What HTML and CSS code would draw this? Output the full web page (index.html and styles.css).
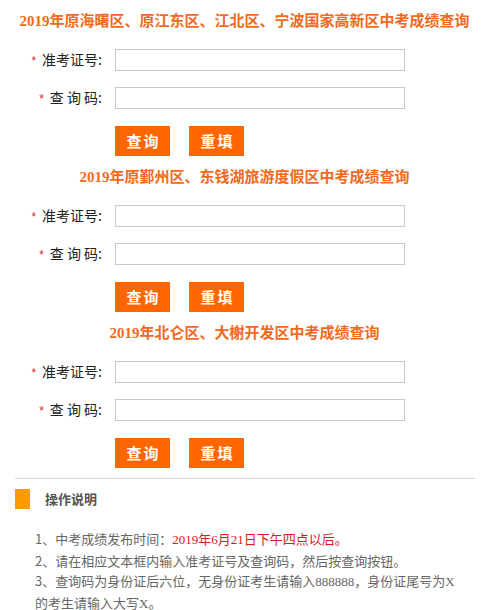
FILE: index.html
```html
<!DOCTYPE html>
<html lang="zh-CN">
<head>
<meta charset="utf-8">
<title>中考成绩查询</title>
<link rel="stylesheet" href="styles.css">
</head>
<body>
<div class="page">
  <section class="query">
    <h2 class="title">2019年原海曙区、原江东区、江北区、宁波国家高新区中考成绩查询</h2>
    <form class="form">
      <div class="row"><label class="label"><span class="star">*</span>准考证号:</label><input class="field" type="text"></div>
      <div class="row"><label class="label"><span class="star">*</span>查 询 码:</label><input class="field" type="text"></div>
      <div class="actions"><button type="button" class="btn">查询</button><button type="reset" class="btn">重填</button></div>
    </form>
  </section>
  <section class="query">
    <h2 class="title">2019年原鄞州区、东钱湖旅游度假区中考成绩查询</h2>
    <form class="form">
      <div class="row"><label class="label"><span class="star">*</span>准考证号:</label><input class="field" type="text"></div>
      <div class="row"><label class="label"><span class="star">*</span>查 询 码:</label><input class="field" type="text"></div>
      <div class="actions"><button type="button" class="btn">查询</button><button type="reset" class="btn">重填</button></div>
    </form>
  </section>
  <section class="query">
    <h2 class="title">2019年北仑区、大榭开发区中考成绩查询</h2>
    <form class="form">
      <div class="row"><label class="label"><span class="star">*</span>准考证号:</label><input class="field" type="text"></div>
      <div class="row"><label class="label"><span class="star">*</span>查 询 码:</label><input class="field" type="text"></div>
      <div class="actions"><button type="button" class="btn">查询</button><button type="reset" class="btn">重填</button></div>
    </form>
  </section>
  <div class="divider"></div>
  <div class="notice">
    <div class="notice-head"><span class="mark"></span><span class="notice-title">操作说明</span></div>
    <ul class="notice-list">
      <li>1、中考成绩发布时间：<span class="hl">2019年6月21日下午四点以后。</span></li>
      <li>2、请在相应文本框内输入准考证号及查询码，然后按查询按钮。</li>
      <li>3、查询码为身份证后六位，无身份证考生请输入<span class="serif">888888</span>，身份证尾号为<span class="serif">X</span>的考生请输入大写<span class="serif">X</span>。</li>
    </ul>
  </div>
</div>
</body>
</html>
```

FILE: styles.css
```css
* { box-sizing: border-box; }
html, body { margin: 0; padding: 0; background: #fff; }
body { font-family: "Noto Sans CJK SC", "Liberation Sans", sans-serif; color: #333; }
.page { width: 489px; }
.query { display: flex; flex-direction: column; }
.title {
  margin: 0 0 6px;
  height: 42px;
  line-height: 42px;
  text-align: center;
  font-family: "Liberation Serif", "Noto Sans CJK SC", serif;
  font-size: 15px;
  font-weight: bold;
  color: #f36a1c;
  white-space: nowrap;
}
.form { display: flex; flex-direction: column; gap: 16px; margin: 0; }
.row {
  display: grid;
  grid-template-columns: 102px 290px;
  column-gap: 13px;
  align-items: center;
  height: 22px;
}
.label {
  text-align: right;
  font-size: 14px;
  line-height: 22px;
  color: #222;
  white-space: pre;
}
.star { color: #d9272e; font-size: 12px; margin-right: 6px; font-family: "Liberation Sans", sans-serif; }
.field {
  width: 290px;
  height: 22px;
  margin: 0;
  padding: 0 4px;
  border: 1px solid #c9c9c9;
  background: #fff;
  outline: none;
}
.actions { display: flex; gap: 19px; padding-left: 115px; margin-top: 2px; }
.btn {
  width: 55px;
  height: 30px;
  margin: 0;
  padding: 0 0 0 2px;
  border: 0;
  background: #ff6600;
  color: #fff;
  font-family: "Noto Sans CJK SC", sans-serif;
  font-size: 15px;
  font-weight: bold;
  letter-spacing: 2px;
  line-height: 30px;
}
.divider { height: 1px; background: #d6d6d6; margin: 10px 14px 0 15px; }
.notice { padding-top: 10px; }
.notice-head { display: flex; align-items: center; gap: 15px; padding-left: 15px; height: 20px; }
.mark { width: 15px; height: 20px; background: #ff9900; }
.notice-title { font-size: 13px; font-weight: bold; color: #555; line-height: 20px; }
.notice-list {
  list-style: none;
  margin: 20px 0 0;
  padding: 0 26px 0 35px;
  font-size: 13px;
  line-height: 20.5px;
  color: #666;
}
.notice-list li { margin: 0; }
.hl { color: #e3141e; font-family: "Liberation Serif", "Noto Sans CJK SC", serif; }
.serif { font-family: "Liberation Serif", serif; }
```
